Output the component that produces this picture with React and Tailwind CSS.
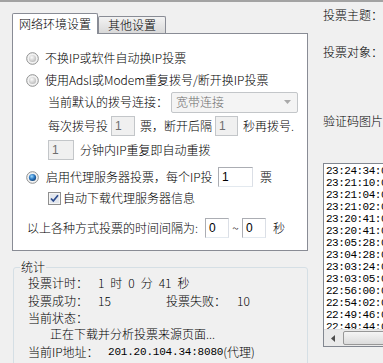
import React from 'react';

const LOG = [
  '23:24:34:0', '23:21:10:0', '23:21:04:0', '23:21:02:0', '23:20:41:0',
  '23:20:41:0', '23:05:28:0', '23:04:28:0', '23:03:24:0', '23:03:05:0',
  '22:56:00:0', '22:54:02:0', '22:49:46:0', '22:49:44:0', '22:48:10:0',
];

function Radio({ checked }) {
  return (
    <svg width="13" height="13" viewBox="0 0 13 13" className="shrink-0">
      <defs>
        <radialGradient id="rOff" cx="40%" cy="35%" r="70%">
          <stop offset="0%" stopColor="#fbfbfb" />
          <stop offset="100%" stopColor="#b9b9b9" />
        </radialGradient>
        <radialGradient id="rOn" cx="40%" cy="35%" r="70%">
          <stop offset="0%" stopColor="#9fdcff" />
          <stop offset="55%" stopColor="#2a76c0" />
          <stop offset="100%" stopColor="#123e6e" />
        </radialGradient>
      </defs>
      <circle cx="6.5" cy="6.5" r="5.8" fill="#f3f3f3" stroke="#8e8f8f" strokeWidth="1" />
      <circle cx="6.5" cy="6.5" r="3.6" fill={checked ? 'url(#rOn)' : 'url(#rOff)'} />
    </svg>
  );
}

function Check() {
  return (
    <svg width="13" height="13" viewBox="0 0 13 13" className="shrink-0">
      <rect x="0.5" y="0.5" width="12" height="12" fill="#f4f4f4" stroke="#8f8f8f" />
      <rect x="2" y="2" width="9" height="9" fill="#e3e7ee" />
      <path d="M3 6.5 L5.3 9 L10 3.3" fill="none" stroke="#2b4a8c" strokeWidth="1.7" />
    </svg>
  );
}

function Box({ value, w, disabled }) {
  return (
    <div
      className={
        'h-[20px] shrink-0 flex items-center pl-[3px] border font-["Liberation_Sans",sans-serif] ' +
        (disabled
          ? 'bg-[#f0f0f0] border-[#c3c6c9] text-[#6d6d6d]'
          : 'bg-white border-[#abadb3] border-b-[#e3e9ef] border-r-[#dbdfe6] text-black')
      }
      style={{ width: w }}
    >
      {value}
    </div>
  );
}

export default function App() {
  return (
    <div className='w-[383px] h-[363px] overflow-hidden bg-[#f0f0f0] text-[12px] leading-[14px] text-black font-light font-["Noto_Sans_CJK_SC","Liberation_Sans",sans-serif]'>
      <div className="h-[2px] bg-[#a3a3a3]" />
      <div className="flex">
        {/* left: tabs + statistics */}
        <div className="ml-[12px] w-[296px] shrink-0">
          <div className="pt-[11px] flex items-end h-[31px]">
            <div className="relative z-10 -mb-px w-[86px] h-[21px] bg-white border border-b-0 border-[#898c95] rounded-t-[2px] flex items-center pl-[6px]">
              网络环境设置
            </div>
            <div className="w-[68px] h-[17px] border border-b-0 border-[#898c95] rounded-t-[2px] bg-gradient-to-b from-[#f3f3f3] to-[#d9d9d9] flex items-center justify-center">
              其他设置
            </div>
          </div>

          <div className="w-[296px] h-[218px] border border-[#898c95] bg-white pt-[13px]">
            <div className="h-[22px] flex items-center pl-[13px]">
              <Radio />
              <span className="ml-[6px]">不换IP或软件自动换IP投票</span>
            </div>
            <div className="h-[22px] flex items-center pl-[13px]">
              <Radio />
              <span className="ml-[6px]">使用Adsl或Modem重复拨号/断开换IP投票</span>
            </div>
            <div className="h-[22px] flex items-center pl-[35px]">
              <span className="w-[123px] shrink-0">当前默认的拨号连接：</span>
              <div className="w-[127px] h-[21px] border border-[#c3c6c9] rounded-[2px] bg-[#f4f4f4] flex items-center justify-between pl-[4px] pr-[6px] text-[#6d6d6d]">
                <span>宽带连接</span>
                <svg width="7" height="4" viewBox="0 0 7 4">
                  <path d="M0 0 H7 L3.5 4 Z" fill="#a9a9a9" />
                </svg>
              </div>
            </div>
            <div className="mt-[2px] h-[22px] flex items-center pl-[35px]">
              <span className="w-[63px] shrink-0">每次拨号投</span>
              <Box value="1" w={24} disabled />
              <span className="ml-[5px] w-[75px] shrink-0">票，断开后隔</span>
              <Box value="1" w={23} disabled />
              <span className="ml-[5px]">秒再拨号.</span>
            </div>
            <div className="mt-[2px] h-[22px] flex items-center pl-[35px]">
              <Box value="1" w={26} disabled />
              <span className="ml-[6px]">分钟内IP重复即自动重拨</span>
            </div>
            <div className="mt-[5px] h-[22px] flex items-center pl-[13px]">
              <Radio checked />
              <span className="ml-[7px] w-[172px] shrink-0">启用代理服务器投票，每个IP投</span>
              <Box value="1" w={35} />
              <span className="ml-[7px]">票</span>
            </div>
            <div className="h-[20px] flex items-center pl-[35px]">
              <Check />
              <span className="ml-[2px]">自动下载代理服务器信息</span>
            </div>
            <div className="mt-[9px] h-[22px] flex items-center pl-[14px]">
              <span className="w-[178px] shrink-0">以上各种方式投票的时间间隔为:</span>
              <Box value="0" w={24} />
              <span className="w-[13px] text-center">~</span>
              <Box value="0" w={24} />
              <span className="ml-[7px]">秒</span>
            </div>
          </div>

          <fieldset className="mt-[10px] ml-px w-[295px] h-[120px] border border-[#d5dfe5] rounded-[3px]">
            <legend className="ml-[6px] px-px leading-[12px]">统计</legend>
            <div className="pt-px pl-[14px]">
              <div className="h-[18px] flex items-center">
                <span className="w-[70px] shrink-0">投票计时：</span>
                <span className="whitespace-pre [word-spacing:3.3px]">1 时 0 分 41 秒</span>
              </div>
              <div className="h-[17px] flex items-center">
                <span className="w-[70px] shrink-0">投票成功：</span>
                <span className="w-[68px] shrink-0">15</span>
                <span className="w-[71px] shrink-0">投票失败：</span>
                <span>10</span>
              </div>
              <div className="h-[17px] flex items-center">当前状态：</div>
              <div className="h-[15px] flex items-center pl-[22px]">正在下载并分析投票来源页面...</div>
              <div className="h-[21px] flex items-center">
                <span className="w-[80px] shrink-0">当前IP地址：</span>
                <span className='font-normal font-["Liberation_Mono",monospace] text-[11px] tracking-[-0.2px]'>201.20.104.34:8080</span>
                <span>(代理)</span>
              </div>
            </div>
          </fieldset>
        </div>

        {/* right: vote info + log */}
        <div className="ml-[15px] shrink-0 w-[100px]">
          <div className="mt-[5px] h-[16px] flex items-center">投票主题：</div>
          <div className="mt-[21px] h-[16px] flex items-center">投票对象：</div>
          <div className="mt-[53px] h-[16px] flex items-center">验证码图片</div>
          <div className="mt-[34px] w-[100px] h-[184px] border border-[#828790] bg-white flex flex-col">
            <div className='flex-1 overflow-hidden pt-px pl-[2px] font-normal font-["Liberation_Mono",monospace] text-[11px] leading-[12px] tracking-[-0.5px]'>
              {LOG.map((t, i) => (
                <div key={i} className="whitespace-nowrap">{t}</div>
              ))}
            </div>
            <div className="h-[17px] shrink-0 flex bg-[#eaeaea] border-t border-[#e0e0e0]">
              <div className="w-[18px] flex items-center justify-center">
                <svg width="4" height="7" viewBox="0 0 4 7">
                  <path d="M4 0 V7 L0 3.5 Z" fill="#4d4d4d" />
                </svg>
              </div>
              <div className="flex-1 my-px ml-px rounded-[2px] border border-[#979797] bg-gradient-to-b from-[#f5f5f5] to-[#dcdcdc]" />
            </div>
          </div>
        </div>
      </div>
    </div>
  );
}
